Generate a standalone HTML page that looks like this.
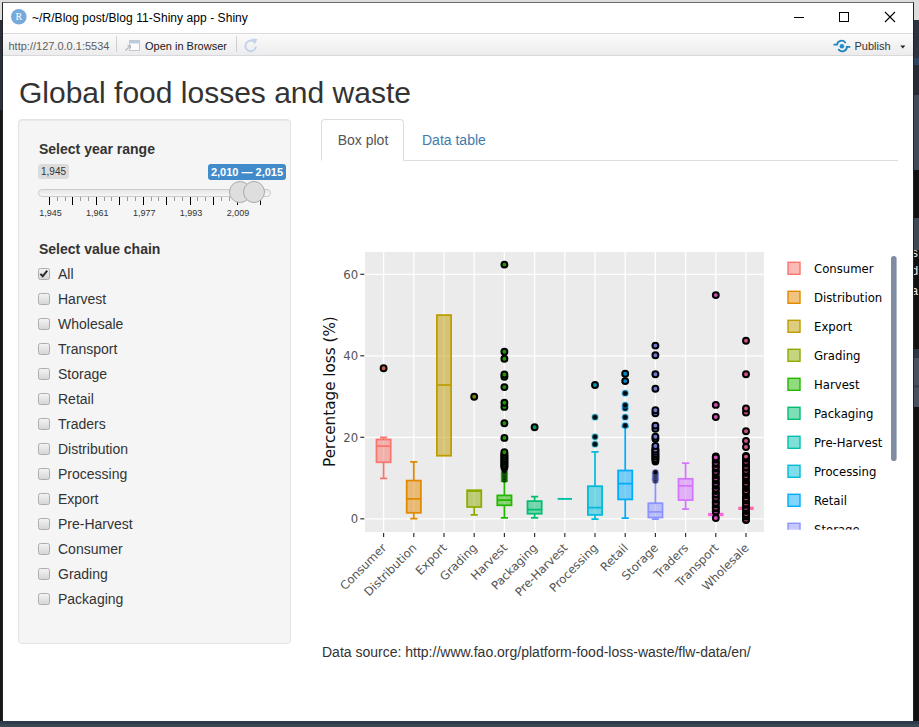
<!DOCTYPE html>
<html><head><meta charset="utf-8"><title>Shiny</title>
<style>
*{box-sizing:border-box}
html,body{margin:0;padding:0}
body{width:919px;height:727px;overflow:hidden;background:#111214;position:relative;font-family:"Liberation Sans",Arial,sans-serif;color:#333}
.abs{position:absolute}
#bgtop{left:0;top:0;width:919px;height:20px;background:#dcdcdc}
#bgleft{left:0;top:20px;width:3px;height:707px;background:linear-gradient(#2a313d 0,#2a313d 90px,#15171b 90px,#15171b 100%)}
#bgright{left:913px;top:20px;width:6px;height:707px;background:linear-gradient(#2c3441 0,#2c3441 38px,#2d4560 38px,#2d4560 45px,#262c36 45px,#262c36 75px,#3f4a5a 75px,#3f4a5a 150px,#111 150px,#111 198px,#3f4855 198px,#3f4855 230px,#111 230px,#111 329px,#2d3645 329px,#2d3645 338px,#465162 338px,#465162 365px,#2d3645 366px,#465162 368px,#465162 387px,#111 387px,#111 100%)}
#bgbot{left:0;top:721px;width:919px;height:6px;background:linear-gradient(#2e3b4a 0,#2e3b4a 3px,#3b4654 3px,#3b4654 100%)}
.trm{left:910.8px;font-family:"Liberation Mono",monospace;font-size:13px;line-height:13px;color:#e4e4e4}
#win{left:2px;top:2px;width:912px;height:719px;background:#fff;border:1px solid #222;border-top-color:#6a6a6a;border-bottom:0}
#tool{left:3px;top:33px;width:910px;height:23px;background:linear-gradient(#fbfbfb,#ececee);border-top:1px solid #dadada;border-bottom:1px solid #d8d8d8}
.sep{position:absolute;top:36px;width:1px;height:16px;background:#cfcfcf}
#ttl{left:32px;top:9.5px;font-size:12px;line-height:16px;color:#000;white-space:nowrap;letter-spacing:.06px}
.tb{position:absolute;top:38.3px;font-size:11px;line-height:16px;white-space:nowrap}
h1{position:absolute;left:19px;top:75.5px;margin:0;font-size:30px;font-weight:400;color:#333;white-space:nowrap;line-height:34px}
#well{left:18px;top:119px;width:273px;height:525px;background:#f5f5f5;border:1px solid #e3e3e3;border-radius:4px;box-shadow:inset 0 1px 1px rgba(0,0,0,.05)}
.lab{position:absolute;left:39px;font-weight:700;font-size:14px;line-height:20px;color:#333;white-space:nowrap}
.cb{position:absolute;left:38px;width:12px;height:12px;border:1px solid #adadad;border-radius:2.5px;background:linear-gradient(#f3f3f3,#d6d6d6)}
.ck{position:absolute;left:-1px;top:-1px;width:12px;height:12px}
.cl{position:absolute;left:58px;font-size:14px;line-height:20px;color:#333;white-space:nowrap}
#irsmin{left:38px;top:164px;width:31px;height:15px;border-radius:3px;background:#dcdcdc;color:#333;font-size:10px;line-height:16px;text-align:center}
#irsft{left:208px;top:164px;width:78px;height:16px;border-radius:3px;background:#428bca;color:#fff;font-size:11px;font-weight:700;line-height:17px;text-align:center;white-space:nowrap}
#irsline{left:38px;top:189px;width:233px;height:8px;border:1px solid #ccc;border-radius:8px;background:linear-gradient(#ddd -50%,#fff 150%)}
.hd{position:absolute;top:181px;width:22px;height:22px;border-radius:50%;border:1px solid #ababab;background:#dedede}
.tkM{position:absolute;top:197px;width:1px;height:8px;background:#000}
.tkS{position:absolute;top:197px;width:1px;height:4px;background:#999}
.tkL{position:absolute;top:208px;width:38px;text-align:center;font-size:9px;line-height:11px;color:#333}
#tabline{left:322px;top:160px;width:576px;height:1px;background:#ddd}
#tab1{left:321px;top:119px;width:83px;height:42px;border:1px solid #ddd;border-bottom-color:#fff;border-radius:4px 4px 0 0;background:#fff;font-size:14px;color:#555;text-align:center;line-height:41px;padding-left:1px}
#tab2{left:422px;top:120px;font-size:14px;color:#3f7bae;line-height:40px;white-space:nowrap}
#src{left:322px;top:641.6px;font-size:14px;line-height:20px;color:#333;white-space:nowrap}
svg text.tk{font-family:"DejaVu Sans",Verdana,sans-serif;font-size:11.7px;fill:#555}
svg text.yt{font-family:"DejaVu Sans",Verdana,sans-serif;font-size:15.2px;fill:#111}
svg text.lg{font-family:"DejaVu Sans",Verdana,sans-serif;font-size:11.7px;fill:#000}
</style></head><body>
<div class="abs" id="bgtop"></div>
<div class="abs" id="bgleft"></div>
<div class="abs" id="bgright"></div>
<div class="abs" id="bgbot"></div>
<div class="abs trm" style="top:247px">s</div>
<div class="abs trm" style="top:265px">d</div>
<div class="abs trm" style="top:284.5px">a</div>
<div class="abs" id="win"></div>
<div class="abs" id="tool"></div>
<svg class="abs" style="left:0;top:0" width="919" height="60" viewBox="0 0 919 60">
<circle cx="18.8" cy="16.7" r="7.8" fill="#75aadb"/>
<text x="18.9" y="20.2" text-anchor="middle" font-family="Liberation Serif,serif" font-size="10" fill="#fff">R</text>
<path d="M794 17.5H804" stroke="#000" stroke-width="1" fill="none"/>
<rect x="839.5" y="12.5" width="9" height="9" fill="none" stroke="#000" stroke-width="1"/>
<path d="M885 12L895 22M895 12L885 22" stroke="#000" stroke-width="1.1" fill="none"/>
<!-- open in browser icon -->
<rect x="129.5" y="40.5" width="10" height="10" fill="#fdfdfd" stroke="#c4c7cc" stroke-width="1"/>
<rect x="130" y="41" width="9" height="2.5" fill="#b9cde2"/>
<path d="M125.5 50.5L130.5 45.5M127.5 45.5H130.5V48.5" stroke="#b5b9c0" stroke-width="1.2" fill="none"/>
<!-- refresh icon -->
<path d="M256 46.5A5.3 5.3 0 1 1 253.2 41.2" stroke="#c3d3e8" stroke-width="2" fill="none"/>
<path d="M251.5 38.5L257.5 39L254.5 44.5Z" fill="#c3d3e8"/>
<!-- publish icon -->
<circle cx="841.9" cy="46.2" r="2.3" fill="#1f8dd2"/>
<path d="M834.3 44.7H837A4.6 4.6 0 0 1 845.2 42.5M849.6 46.9H846.9A4.6 4.6 0 0 1 838.7 49.6" stroke="#1f83bd" stroke-width="1.8" stroke-linecap="round" fill="none"/>
<path d="M900.3 45.6H905.3L902.8 48.4Z" fill="#222"/>
</svg>
<div class="sep" style="left:116px"></div>
<div class="sep" style="left:236px"></div>
<div class="abs" id="ttl">~/R/Blog post/Blog 11-Shiny app - Shiny</div>
<div class="tb" style="left:8.5px;color:#5e5e5e">http://127.0.0.1:5534</div>
<div class="tb" style="left:145px;color:#1a1a1a">Open in Browser</div>
<div class="tb" style="left:854.5px;color:#333">Publish</div>
<h1>Global food losses and waste</h1>
<div class="abs" id="well"></div>
<div class="lab" style="top:139px">Select year range</div>
<div class="abs" id="irsmin">1,945</div>
<div class="abs" id="irsline"></div>
<div class="tkM" style="left:48.9px"></div>
<div class="tkL" style="left:31.4px">1,945</div>
<div class="tkS" style="left:56.7px"></div>
<div class="tkS" style="left:64.5px"></div>
<div class="tkM" style="left:72.3px"></div>
<div class="tkS" style="left:80.2px"></div>
<div class="tkS" style="left:88.0px"></div>
<div class="tkM" style="left:95.8px"></div>
<div class="tkL" style="left:78.3px">1,961</div>
<div class="tkS" style="left:103.6px"></div>
<div class="tkS" style="left:111.4px"></div>
<div class="tkM" style="left:119.2px"></div>
<div class="tkS" style="left:127.0px"></div>
<div class="tkS" style="left:134.9px"></div>
<div class="tkM" style="left:142.7px"></div>
<div class="tkL" style="left:125.2px">1,977</div>
<div class="tkS" style="left:150.5px"></div>
<div class="tkS" style="left:158.3px"></div>
<div class="tkM" style="left:166.1px"></div>
<div class="tkS" style="left:173.9px"></div>
<div class="tkS" style="left:181.8px"></div>
<div class="tkM" style="left:189.6px"></div>
<div class="tkL" style="left:172.1px">1,993</div>
<div class="tkS" style="left:197.4px"></div>
<div class="tkS" style="left:205.2px"></div>
<div class="tkM" style="left:213.0px"></div>
<div class="tkS" style="left:220.8px"></div>
<div class="tkS" style="left:228.6px"></div>
<div class="tkM" style="left:236.5px"></div>
<div class="tkL" style="left:219.0px">2,009</div>
<div class="tkS" style="left:244.3px"></div>
<div class="tkS" style="left:252.1px"></div>
<div class="tkM" style="left:259.9px"></div>
<div class="hd" style="left:228.5px"></div>
<div class="hd" style="left:243px"></div>
<div class="abs" id="irsft">2,010 — 2,015</div>
<div class="lab" style="top:239px">Select value chain</div>
<div class="cb" style="top:268px"><svg class="ck" viewBox="0 0 13 13"><path d="M2.6 6.3 L5.1 9 L10 2.9" fill="none" stroke="#2a2a2a" stroke-width="2.2"/></svg></div><div class="cl" style="top:264px">All</div>
<div class="cb" style="top:293px"></div><div class="cl" style="top:289px">Harvest</div>
<div class="cb" style="top:318px"></div><div class="cl" style="top:314px">Wholesale</div>
<div class="cb" style="top:343px"></div><div class="cl" style="top:339px">Transport</div>
<div class="cb" style="top:368px"></div><div class="cl" style="top:364px">Storage</div>
<div class="cb" style="top:393px"></div><div class="cl" style="top:389px">Retail</div>
<div class="cb" style="top:418px"></div><div class="cl" style="top:414px">Traders</div>
<div class="cb" style="top:443px"></div><div class="cl" style="top:439px">Distribution</div>
<div class="cb" style="top:468px"></div><div class="cl" style="top:464px">Processing</div>
<div class="cb" style="top:493px"></div><div class="cl" style="top:489px">Export</div>
<div class="cb" style="top:518px"></div><div class="cl" style="top:514px">Pre-Harvest</div>
<div class="cb" style="top:543px"></div><div class="cl" style="top:539px">Consumer</div>
<div class="cb" style="top:568px"></div><div class="cl" style="top:564px">Grading</div>
<div class="cb" style="top:593px"></div><div class="cl" style="top:589px">Packaging</div>
<div class="abs" id="tabline"></div>
<div class="abs" id="tab1">Box plot</div>
<div class="abs" id="tab2">Data table</div>
<svg class="abs" style="left:0;top:0" width="919" height="727" viewBox="0 0 919 727">
<rect x="365" y="252" width="398.9" height="280" fill="#ebebeb"/>
<line x1="383.6" x2="383.6" y1="252" y2="532" stroke="#fff" stroke-width="1.3"/>
<line x1="413.8" x2="413.8" y1="252" y2="532" stroke="#fff" stroke-width="1.3"/>
<line x1="444.0" x2="444.0" y1="252" y2="532" stroke="#fff" stroke-width="1.3"/>
<line x1="474.2" x2="474.2" y1="252" y2="532" stroke="#fff" stroke-width="1.3"/>
<line x1="504.4" x2="504.4" y1="252" y2="532" stroke="#fff" stroke-width="1.3"/>
<line x1="534.6" x2="534.6" y1="252" y2="532" stroke="#fff" stroke-width="1.3"/>
<line x1="564.8" x2="564.8" y1="252" y2="532" stroke="#fff" stroke-width="1.3"/>
<line x1="595.0" x2="595.0" y1="252" y2="532" stroke="#fff" stroke-width="1.3"/>
<line x1="625.2" x2="625.2" y1="252" y2="532" stroke="#fff" stroke-width="1.3"/>
<line x1="655.4" x2="655.4" y1="252" y2="532" stroke="#fff" stroke-width="1.3"/>
<line x1="685.6" x2="685.6" y1="252" y2="532" stroke="#fff" stroke-width="1.3"/>
<line x1="715.8" x2="715.8" y1="252" y2="532" stroke="#fff" stroke-width="1.3"/>
<line x1="746.0" x2="746.0" y1="252" y2="532" stroke="#fff" stroke-width="1.3"/>
<line x1="365" x2="763.9" y1="518.8" y2="518.8" stroke="#fff" stroke-width="1.3"/>
<line x1="365" x2="763.9" y1="437.3" y2="437.3" stroke="#fff" stroke-width="1.3"/>
<line x1="365" x2="763.9" y1="355.8" y2="355.8" stroke="#fff" stroke-width="1.3"/>
<line x1="365" x2="763.9" y1="274.3" y2="274.3" stroke="#fff" stroke-width="1.3"/>
<rect x="376.5" y="439.5" width="14.2" height="22.8" fill="rgba(248,118,109,0.5)" stroke="#F8766D" stroke-width="1.75"/>
<path d="M383.6,439.5V437.4M380.0,437.4H387.2M383.6,462.3V478.3M380.0,478.3H387.2M376.5,446.1H390.7" fill="none" stroke="#F8766D" stroke-width="1.75"/>
<g fill="#cb6059" stroke="#000" stroke-width="2.0">
<circle cx="383.6" cy="368.3" r="2.95"/>
</g>
<rect x="406.7" y="480.6" width="14.2" height="32.2" fill="rgba(225,138,0,0.5)" stroke="#E18A00" stroke-width="1.75"/>
<path d="M413.8,480.6V461.8M410.2,461.8H417.4M413.8,512.8V518.5M410.2,518.5H417.4M406.7,498.9H420.9" fill="none" stroke="#E18A00" stroke-width="1.75"/>
<rect x="436.9" y="315.1" width="14.2" height="140.6" fill="rgba(190,156,0,0.5)" stroke="#BE9C00" stroke-width="1.75"/>
<path d="M436.9,385.0H451.1" fill="none" stroke="#BE9C00" stroke-width="1.75"/>
<rect x="467.1" y="490.2" width="14.2" height="16.8" fill="rgba(140,171,0,0.5)" stroke="#8CAB00" stroke-width="1.75"/>
<path d="M474.2,507.0V514.9M470.6,514.9H477.8M467.1,491.0H481.3" fill="none" stroke="#8CAB00" stroke-width="1.75"/>
<g fill="#728c00" stroke="#000" stroke-width="2.0">
<circle cx="474.2" cy="396.8" r="2.95"/>
</g>
<rect x="497.3" y="495.4" width="14.2" height="9.9" fill="rgba(36,183,0,0.5)" stroke="#24B700" stroke-width="1.75"/>
<path d="M504.4,495.4V481.0M500.8,481.0H508.0M504.4,505.3V517.8M500.8,517.8H508.0M497.3,500.0H511.5" fill="none" stroke="#24B700" stroke-width="1.75"/>
<g fill="#04080c" stroke="#24B700" stroke-opacity="0.42" stroke-width="1.7">
<circle cx="504.4" cy="479.6" r="2.9"/>
<circle cx="504.4" cy="477.6" r="2.9"/>
<circle cx="504.4" cy="475.5" r="2.9"/>
<circle cx="504.4" cy="473.4" r="2.9"/>
<circle cx="504.4" cy="471.4" r="2.9"/>
</g>
<path d="M504.4,455.0V467.5" stroke="#000" stroke-width="7.8" stroke-linecap="round" fill="none"/>
<g fill="#1d9600" stroke="#000" stroke-width="2.0">
<circle cx="504.4" cy="466.0" r="2.95"/>
<circle cx="504.4" cy="464.0" r="1.9" fill="#000"/>
<circle cx="504.4" cy="463.7" r="2.95"/>
<circle cx="504.4" cy="461.7" r="1.9" fill="#000"/>
<circle cx="504.4" cy="461.4" r="2.95"/>
<circle cx="504.4" cy="459.4" r="1.9" fill="#000"/>
<circle cx="504.4" cy="459.1" r="2.95"/>
<circle cx="504.4" cy="457.1" r="1.9" fill="#000"/>
<circle cx="504.4" cy="456.8" r="2.95"/>
<circle cx="504.4" cy="454.5" r="2.95"/>
<circle cx="504.4" cy="452.2" r="2.95"/>
<circle cx="504.4" cy="437.9" r="2.95"/>
<circle cx="504.4" cy="423.3" r="2.95"/>
<circle cx="504.4" cy="406.9" r="2.95"/>
<circle cx="504.4" cy="402.7" r="2.95"/>
<circle cx="504.4" cy="387.1" r="2.95"/>
<circle cx="504.4" cy="376.7" r="2.95"/>
<circle cx="504.4" cy="374.5" r="2.95"/>
<circle cx="504.4" cy="358.7" r="2.95"/>
<circle cx="504.4" cy="351.8" r="2.95"/>
<circle cx="504.4" cy="264.6" r="2.95"/>
</g>
<rect x="527.5" y="501.1" width="14.2" height="12.6" fill="rgba(0,190,112,0.5)" stroke="#00BE70" stroke-width="1.75"/>
<path d="M534.6,501.1V496.6M531.0,496.6H538.2M534.6,513.7V517.8M531.0,517.8H538.2M527.5,509.7H541.7" fill="none" stroke="#00BE70" stroke-width="1.75"/>
<g fill="#009b5b" stroke="#000" stroke-width="2.0">
<circle cx="534.6" cy="427.2" r="2.95"/>
</g>
<path d="M557.6,498.9H572.0" fill="none" stroke="#00C1AB" stroke-width="1.9"/>
<rect x="587.9" y="486.2" width="14.2" height="28.7" fill="rgba(0,187,218,0.5)" stroke="#00BBDA" stroke-width="1.75"/>
<path d="M595.0,486.2V451.9M591.4,451.9H598.6M595.0,514.9V519.2M591.4,519.2H598.6M587.9,507.6H602.1" fill="none" stroke="#00BBDA" stroke-width="1.75"/>
<g fill="#04080c" stroke="#00BBDA" stroke-opacity="0.42" stroke-width="1.7">
<circle cx="595.0" cy="444.2" r="2.9"/>
<circle cx="595.0" cy="436.8" r="2.9"/>
<circle cx="595.0" cy="417.2" r="2.9"/>
</g>
<g fill="#0099b2" stroke="#000" stroke-width="2.0">
<circle cx="595.0" cy="385.0" r="2.95"/>
</g>
<rect x="618.1" y="470.5" width="14.2" height="28.9" fill="rgba(0,172,252,0.5)" stroke="#00ACFC" stroke-width="1.75"/>
<path d="M625.2,470.5V426.5M621.6,426.5H628.8M625.2,499.4V518.0M621.6,518.0H628.8M618.1,483.5H632.3" fill="none" stroke="#00ACFC" stroke-width="1.75"/>
<g fill="#04080c" stroke="#00ACFC" stroke-opacity="0.42" stroke-width="1.7">
<circle cx="625.2" cy="425.6" r="2.9"/>
<circle cx="625.2" cy="417.2" r="2.9"/>
<circle cx="625.2" cy="408.3" r="2.9"/>
<circle cx="625.2" cy="405.2" r="2.9"/>
<circle cx="625.2" cy="393.2" r="2.9"/>
</g>
<g fill="#008dce" stroke="#000" stroke-width="2.0">
<circle cx="625.2" cy="381.1" r="2.95"/>
<circle cx="625.2" cy="373.7" r="2.95"/>
</g>
<rect x="648.3" y="503.2" width="14.2" height="14.3" fill="rgba(139,147,255,0.5)" stroke="#8B93FF" stroke-width="1.75"/>
<path d="M655.4,503.2V479.2M651.8,479.2H659.0M655.4,517.5V519.2M651.8,519.2H659.0M648.3,511.9H662.5" fill="none" stroke="#8B93FF" stroke-width="1.75"/>
<g fill="#04080c" stroke="#8B93FF" stroke-opacity="0.42" stroke-width="1.7">
<circle cx="655.4" cy="480.6" r="2.9"/>
<circle cx="655.4" cy="478.6" r="2.9"/>
<circle cx="655.4" cy="476.5" r="2.9"/>
<circle cx="655.4" cy="474.4" r="2.9"/>
<circle cx="655.4" cy="472.4" r="2.9"/>
</g>
<path d="M655.4,449.5V461.5" stroke="#000" stroke-width="7.8" stroke-linecap="round" fill="none"/>
<g fill="#7178d1" stroke="#000" stroke-width="2.0">
<circle cx="655.4" cy="458.7" r="2.95"/>
<circle cx="655.4" cy="456.7" r="1.9" fill="#000"/>
<circle cx="655.4" cy="456.4" r="2.95"/>
<circle cx="655.4" cy="454.4" r="1.9" fill="#000"/>
<circle cx="655.4" cy="454.1" r="2.95"/>
<circle cx="655.4" cy="452.1" r="1.9" fill="#000"/>
<circle cx="655.4" cy="451.8" r="2.95"/>
<circle cx="655.4" cy="449.5" r="2.95"/>
<circle cx="655.4" cy="446.0" r="2.95"/>
<circle cx="655.4" cy="438.8" r="2.95"/>
<circle cx="655.4" cy="436.8" r="2.95"/>
<circle cx="655.4" cy="428.7" r="2.95"/>
<circle cx="655.4" cy="425.6" r="2.95"/>
<circle cx="655.4" cy="413.3" r="2.95"/>
<circle cx="655.4" cy="410.2" r="2.95"/>
<circle cx="655.4" cy="388.8" r="2.95"/>
<circle cx="655.4" cy="374.3" r="2.95"/>
<circle cx="655.4" cy="355.3" r="2.95"/>
<circle cx="655.4" cy="345.6" r="2.95"/>
</g>
<rect x="678.5" y="478.8" width="14.2" height="21.3" fill="rgba(213,117,254,0.5)" stroke="#D575FE" stroke-width="1.75"/>
<path d="M685.6,478.8V463.2M682.0,463.2H689.2M685.6,500.1V509.1M682.0,509.1H689.2M678.5,485.8H692.7" fill="none" stroke="#D575FE" stroke-width="1.75"/>
<path d="M708.1,514.5H723.5" fill="none" stroke="#F962DD" stroke-width="3.3"/>
<path d="M715.8,456.5V511.5" stroke="#000" stroke-width="7.8" stroke-linecap="round" fill="none"/>
<g fill="#cc50b5" stroke="#000" stroke-width="2.0">
<circle cx="715.8" cy="518.0" r="2.95"/>
<circle cx="715.8" cy="511.4" r="2.95"/>
<circle cx="715.8" cy="509.4" r="1.9" fill="#000"/>
<circle cx="715.8" cy="507.6" r="2.95"/>
<circle cx="715.8" cy="505.6" r="1.9" fill="#000"/>
<circle cx="715.8" cy="502.7" r="2.95"/>
<circle cx="715.8" cy="500.7" r="1.9" fill="#000"/>
<circle cx="715.8" cy="497.8" r="2.95"/>
<circle cx="715.8" cy="495.8" r="1.9" fill="#000"/>
<circle cx="715.8" cy="494.0" r="2.95"/>
<circle cx="715.8" cy="492.0" r="1.9" fill="#000"/>
<circle cx="715.8" cy="488.8" r="2.95"/>
<circle cx="715.8" cy="486.8" r="1.9" fill="#000"/>
<circle cx="715.8" cy="483.5" r="2.95"/>
<circle cx="715.8" cy="481.5" r="1.9" fill="#000"/>
<circle cx="715.8" cy="478.3" r="2.95"/>
<circle cx="715.8" cy="476.3" r="1.9" fill="#000"/>
<circle cx="715.8" cy="471.7" r="2.95"/>
<circle cx="715.8" cy="469.7" r="1.9" fill="#000"/>
<circle cx="715.8" cy="467.0" r="2.95"/>
<circle cx="715.8" cy="465.0" r="1.9" fill="#000"/>
<circle cx="715.8" cy="462.7" r="2.95"/>
<circle cx="715.8" cy="460.7" r="1.9" fill="#000"/>
<circle cx="715.8" cy="457.4" r="2.95"/>
<circle cx="715.8" cy="417.0" r="2.95"/>
<circle cx="715.8" cy="404.9" r="2.95"/>
<circle cx="715.8" cy="295.1" r="2.95"/>
</g>
<path d="M738.3,508.3H753.7" fill="none" stroke="#FF65AC" stroke-width="3.3"/>
<path d="M746.0,456.0V520.0" stroke="#000" stroke-width="7.8" stroke-linecap="round" fill="none"/>
<g fill="#d1528d" stroke="#000" stroke-width="2.0">
<circle cx="746.0" cy="519.6" r="2.95"/>
<circle cx="746.0" cy="517.6" r="1.9" fill="#000"/>
<circle cx="746.0" cy="514.0" r="2.95"/>
<circle cx="746.0" cy="512.0" r="1.9" fill="#000"/>
<circle cx="746.0" cy="507.9" r="2.95"/>
<circle cx="746.0" cy="505.9" r="1.9" fill="#000"/>
<circle cx="746.0" cy="503.6" r="2.95"/>
<circle cx="746.0" cy="501.6" r="1.9" fill="#000"/>
<circle cx="746.0" cy="498.3" r="2.95"/>
<circle cx="746.0" cy="496.3" r="1.9" fill="#000"/>
<circle cx="746.0" cy="491.0" r="2.95"/>
<circle cx="746.0" cy="489.0" r="1.9" fill="#000"/>
<circle cx="746.0" cy="483.5" r="2.95"/>
<circle cx="746.0" cy="481.5" r="1.9" fill="#000"/>
<circle cx="746.0" cy="476.1" r="2.95"/>
<circle cx="746.0" cy="474.1" r="1.9" fill="#000"/>
<circle cx="746.0" cy="470.8" r="2.95"/>
<circle cx="746.0" cy="468.8" r="1.9" fill="#000"/>
<circle cx="746.0" cy="466.7" r="2.95"/>
<circle cx="746.0" cy="464.7" r="1.9" fill="#000"/>
<circle cx="746.0" cy="461.8" r="2.95"/>
<circle cx="746.0" cy="459.8" r="1.9" fill="#000"/>
<circle cx="746.0" cy="456.6" r="2.95"/>
<circle cx="746.0" cy="447.0" r="2.95"/>
<circle cx="746.0" cy="440.9" r="2.95"/>
<circle cx="746.0" cy="431.3" r="2.95"/>
<circle cx="746.0" cy="412.5" r="2.95"/>
<circle cx="746.0" cy="408.5" r="2.95"/>
<circle cx="746.0" cy="374.3" r="2.95"/>
<circle cx="746.0" cy="340.7" r="2.95"/>
</g>
<line x1="360.3" x2="364.3" y1="518.8" y2="518.8" stroke="#333" stroke-width="1.2"/>
<text x="358.2" y="523.4" text-anchor="end" class="tk">0</text>
<line x1="360.3" x2="364.3" y1="437.3" y2="437.3" stroke="#333" stroke-width="1.2"/>
<text x="358.2" y="441.9" text-anchor="end" class="tk">20</text>
<line x1="360.3" x2="364.3" y1="355.8" y2="355.8" stroke="#333" stroke-width="1.2"/>
<text x="358.2" y="360.4" text-anchor="end" class="tk">40</text>
<line x1="360.3" x2="364.3" y1="274.3" y2="274.3" stroke="#333" stroke-width="1.2"/>
<text x="358.2" y="278.9" text-anchor="end" class="tk">60</text>
<line x1="383.6" x2="383.6" y1="533" y2="537" stroke="#333" stroke-width="1.2"/>
<text transform="translate(387.1,548.6) rotate(-45)" text-anchor="end" class="tk">Consumer</text>
<line x1="413.8" x2="413.8" y1="533" y2="537" stroke="#333" stroke-width="1.2"/>
<text transform="translate(417.3,548.6) rotate(-45)" text-anchor="end" class="tk">Distribution</text>
<line x1="444.0" x2="444.0" y1="533" y2="537" stroke="#333" stroke-width="1.2"/>
<text transform="translate(447.5,548.6) rotate(-45)" text-anchor="end" class="tk">Export</text>
<line x1="474.2" x2="474.2" y1="533" y2="537" stroke="#333" stroke-width="1.2"/>
<text transform="translate(477.7,548.6) rotate(-45)" text-anchor="end" class="tk">Grading</text>
<line x1="504.4" x2="504.4" y1="533" y2="537" stroke="#333" stroke-width="1.2"/>
<text transform="translate(507.9,548.6) rotate(-45)" text-anchor="end" class="tk">Harvest</text>
<line x1="534.6" x2="534.6" y1="533" y2="537" stroke="#333" stroke-width="1.2"/>
<text transform="translate(538.1,548.6) rotate(-45)" text-anchor="end" class="tk">Packaging</text>
<line x1="564.8" x2="564.8" y1="533" y2="537" stroke="#333" stroke-width="1.2"/>
<text transform="translate(568.3,548.6) rotate(-45)" text-anchor="end" class="tk">Pre-Harvest</text>
<line x1="595.0" x2="595.0" y1="533" y2="537" stroke="#333" stroke-width="1.2"/>
<text transform="translate(598.5,548.6) rotate(-45)" text-anchor="end" class="tk">Processing</text>
<line x1="625.2" x2="625.2" y1="533" y2="537" stroke="#333" stroke-width="1.2"/>
<text transform="translate(628.7,548.6) rotate(-45)" text-anchor="end" class="tk">Retail</text>
<line x1="655.4" x2="655.4" y1="533" y2="537" stroke="#333" stroke-width="1.2"/>
<text transform="translate(658.9,548.6) rotate(-45)" text-anchor="end" class="tk">Storage</text>
<line x1="685.6" x2="685.6" y1="533" y2="537" stroke="#333" stroke-width="1.2"/>
<text transform="translate(689.1,548.6) rotate(-45)" text-anchor="end" class="tk">Traders</text>
<line x1="715.8" x2="715.8" y1="533" y2="537" stroke="#333" stroke-width="1.2"/>
<text transform="translate(719.3,548.6) rotate(-45)" text-anchor="end" class="tk">Transport</text>
<line x1="746.0" x2="746.0" y1="533" y2="537" stroke="#333" stroke-width="1.2"/>
<text transform="translate(749.5,548.6) rotate(-45)" text-anchor="end" class="tk">Wholesale</text>
<text transform="translate(334.8,391.6) rotate(-90)" text-anchor="middle" class="yt">Percentage loss (%)</text>
<clipPath id="lc"><rect x="780" y="252" width="125" height="277.7"/></clipPath><g clip-path="url(#lc)">
<rect x="788" y="262.3" width="12" height="12" fill="rgba(248,118,109,0.5)" stroke="#F8766D" stroke-width="1.4"/>
<text x="814" y="272.5" class="lg">Consumer</text>
<rect x="788" y="291.3" width="12" height="12" fill="rgba(225,138,0,0.5)" stroke="#E18A00" stroke-width="1.4"/>
<text x="814" y="301.5" class="lg">Distribution</text>
<rect x="788" y="320.3" width="12" height="12" fill="rgba(190,156,0,0.5)" stroke="#BE9C00" stroke-width="1.4"/>
<text x="814" y="330.5" class="lg">Export</text>
<rect x="788" y="349.3" width="12" height="12" fill="rgba(140,171,0,0.5)" stroke="#8CAB00" stroke-width="1.4"/>
<text x="814" y="359.5" class="lg">Grading</text>
<rect x="788" y="378.3" width="12" height="12" fill="rgba(36,183,0,0.5)" stroke="#24B700" stroke-width="1.4"/>
<text x="814" y="388.5" class="lg">Harvest</text>
<rect x="788" y="407.3" width="12" height="12" fill="rgba(0,190,112,0.5)" stroke="#00BE70" stroke-width="1.4"/>
<text x="814" y="417.5" class="lg">Packaging</text>
<rect x="788" y="436.3" width="12" height="12" fill="rgba(0,193,171,0.5)" stroke="#00C1AB" stroke-width="1.4"/>
<text x="814" y="446.5" class="lg">Pre-Harvest</text>
<rect x="788" y="465.3" width="12" height="12" fill="rgba(0,187,218,0.5)" stroke="#00BBDA" stroke-width="1.4"/>
<text x="814" y="475.5" class="lg">Processing</text>
<rect x="788" y="494.3" width="12" height="12" fill="rgba(0,172,252,0.5)" stroke="#00ACFC" stroke-width="1.4"/>
<text x="814" y="504.5" class="lg">Retail</text>
<rect x="788" y="523.3" width="12" height="12" fill="rgba(139,147,255,0.5)" stroke="#8B93FF" stroke-width="1.4"/>
<text x="814" y="533.5" class="lg">Storage</text>
</g>
<rect x="891" y="256" width="5.6" height="205" rx="2.8" fill="#808ba4"/>
</svg>
<div class="abs" id="src">Data source: http://www.fao.org/platform-food-loss-waste/flw-data/en/</div>
</body></html>
